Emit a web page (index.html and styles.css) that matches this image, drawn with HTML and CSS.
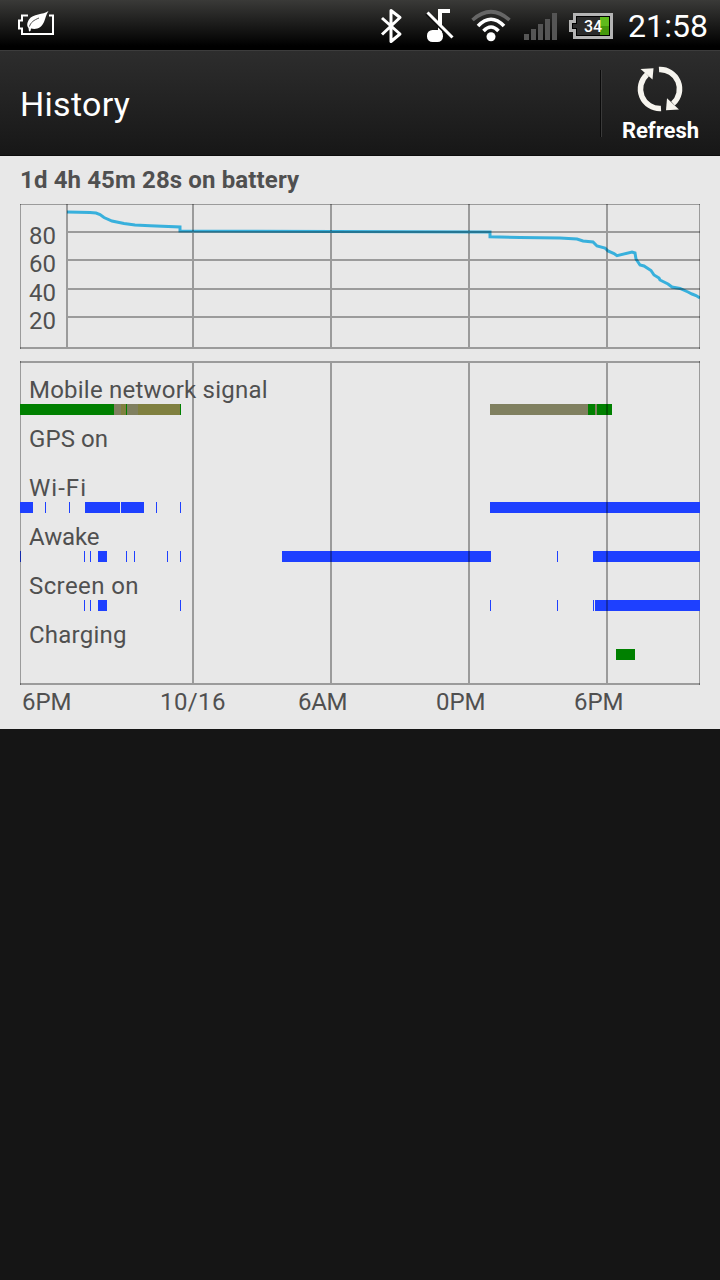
FILE: index.html
```
<!DOCTYPE html>
<html lang="en">
<head>
    <meta charset="UTF-8">
    <meta name="viewport" content="width=device-width, initial-scale=1.0">
    <title>History</title>
    <link rel="stylesheet" href="styles.css">
</head>
<body>
    <div class="status-bar">
        <!-- Power saver -->
        <svg class="saver-icon" width="40" height="30" viewBox="16 8 40 30">
            <path d="M28 15.500H22V20.500H19V28.500H22V34H53V15.500H49" fill="none" stroke="#fff" stroke-width="2"/>
            <path d="M48.500 11C43 15 33 13.500 29 19.500C26.500 23.500 27 26 28.500 28L29 31.500L30.500 31L31 28.500C37 30 41.500 27.500 44 22C45.500 18 46 15 48.500 11Z" fill="#fff"/>
            <path d="M29.500 26.500C30.500 22.500 34 20 39 18" fill="none" stroke="#222" stroke-width="0.800"/>
        </svg>

        <div class="status-right">
            <!-- Bluetooth, silent, wifi, signal, battery -->
            <svg width="240" height="40" viewBox="376 5 240 40">
                <path d="M382 18L400 34L391 41.500V10.500L400 17.500L382 34.500" fill="none" stroke="#fff" stroke-width="3" stroke-linejoin="round"/>

                <path d="M438 9H450V13H442V36H438Z" fill="#fff"/>
                <rect x="427" y="30" width="16" height="12" rx="5.500" fill="#fff"/>
                <path d="M426 14L451 39" stroke="#111" stroke-width="2"/>
                <path d="M427.500 12.500L452.500 37.500" stroke="#fff" stroke-width="3"/>

                <circle cx="491" cy="36.800" r="4.500" fill="#fff"/>
                <g fill="none" stroke-width="3.600">
                    <path d="M483.500 31Q491 23 498.500 31" stroke="#fff"/>
                    <path d="M478 26Q491 12.500 504 26" stroke="#fff"/>
                    <path d="M472.500 20Q491 3.500 509.500 20" stroke="#666"/>
                </g>

                <g fill="#555">
                    <rect x="524" y="34" width="5" height="6"/>
                    <rect x="531" y="29" width="5" height="11"/>
                    <rect x="538" y="24" width="5" height="16"/>
                    <rect x="545" y="19" width="5" height="21"/>
                    <rect x="552" y="13" width="5" height="27"/>
                </g>

                <path d="M573 13H613V39H573V32H569V20H573Z" fill="#b4b4b4"/>
                <path d="M576 16H610V36H576V29H572V23H576Z" fill="#000"/>
                <path d="M577 17H600V35H577V28H573V24H577Z" fill="#2b2b2b"/>
                <rect x="600" y="17" width="9" height="9" fill="#5fbb1c"/>
                <rect x="600" y="26" width="9" height="9" fill="#45990c"/>
                <text class="battery-text" x="593" y="32" text-anchor="middle">34</text>
            </svg>
            <span class="clock">21:58</span>
        </div>
    </div>

    <div class="header">
        <h1>History</h1>
        <div class="refresh">
            <svg width="48" height="48" viewBox="636 65 48 48">
                <g fill="none" stroke="#f6f4ee" stroke-width="5.500">
                    <path d="M661 108.400A19.400 19.400 0 0 1 647 74.500"/>
                    <path d="M659 69.600A19.400 19.400 0 0 1 673 103.500"/>
                </g>
                <path d="M640.500 69L653.500 68.200L652.500 79.500Z" fill="#f6f4ee"/>
                <path d="M679 109.500L666 110.200L667 98.300Z" fill="#f6f4ee"/>
            </svg>
            <span>Refresh</span>
        </div>
    </div>

    <div class="panel">
        <h2>1d 4h 45m 28s on battery</h2>

        <!-- Battery level -->
        <svg class="chart" width="680" height="145" viewBox="20 204 680 145">
            <polyline class="level" points="67,212 90,212.500 96,213 100,214.500 104,217.500 112,221 124,223.500 135,225 150,225.700 180,227 180,231 490,232 490,236.700 520,237.500 560,238 577,239 583,241 593,242 597,246 605,248 608,251 614,253.500 617,255.700 632,252 635,253 636,259 640,265 644,266 651,270.500 654,275 659,278 660,280 668,284 672,287 680,288.500 688,292 692,294 696,295.500 700,298"/>
            <path class="grid" d="M67 232H700M67 260H700M67 289H700M67 317H700M20 348H700M67 204V349M193 204V349M331 204V349M469 204V349M607 204V349"/>
            <path class="edge" d="M20 204.500H700M20.500 204V349M699.500 204V349"/>
            <g class="label">
                <text x="29" y="244" textLength="27">80</text>
                <text x="29" y="272" textLength="27">60</text>
                <text x="29" y="301" textLength="27">40</text>
                <text x="29" y="329" textLength="27">20</text>
            </g>
        </svg>

        <!-- Timeline -->
        <svg class="chart timeline" width="680" height="360" viewBox="20 361 680 360">
            <path class="green" d="M20 404h94v11h-94zM126 404h1v11h-1zM180 404h1v11h-1zM588 404h24v11h-24z"/>
            <path class="weak" d="M114 404h7v11h-7zM127 404h11v11h-11zM490 404h98v11h-98zM595 404h2v11h-2z"/>
            <path class="poor" d="M121 404h5v11h-5zM138 404h42v11h-42z"/>

            <path class="blue" d="M20 502h13v11h-13zM45 502h1v11h-1zM69 502h1v11h-1zM85 502h35v11h-35zM121 502h23v11h-23zM156 502h1v11h-1zM180 502h1v11h-1zM490 502h210v11h-210z"/>
            <path class="blue" d="M20 551h1v11h-1zM84 551h1v11h-1zM90 551h1v11h-1zM98 551h9v11h-9zM126 551h1v11h-1zM134 551h1v11h-1zM167 551h1v11h-1zM180 551h1v11h-1zM282 551h209v11h-209zM557 551h1v11h-1zM593 551h107v11h-107z"/>
            <path class="blue" d="M84 600h1v11h-1zM90 600h1v11h-1zM98 600h9v11h-9zM180 600h1v11h-1zM490 600h1v11h-1zM557 600h1v11h-1zM593 600h1v11h-1zM595 600h105v11h-105z"/>
            <path class="green" d="M616 649h19v11h-19z"/>

            <path class="grid" d="M20 362H700M20 684H700M193 361V685M331 361V685M469 361V685M607 361V685"/>
            <path class="edge" d="M20.500 361V404M20.500 415V502M20.500 513V685M699.500 361V502M699.500 513V551M699.500 562V600M699.500 611V685"/>

            <g class="label">
                <text x="29" y="398" textLength="238.500">Mobile network signal</text>
                <text x="29" y="447" textLength="79">GPS on</text>
                <text x="29" y="496" textLength="57">Wi-Fi</text>
                <text x="29" y="545" textLength="70.500">Awake</text>
                <text x="29" y="594" textLength="109.500">Screen on</text>
                <text x="29" y="643" textLength="97.500">Charging</text>
                <text x="22" y="710" textLength="49.500">6PM</text>
                <text x="160" y="710" textLength="65.500">10/16</text>
                <text x="298" y="710" textLength="49.500">6AM</text>
                <text x="436" y="710" textLength="49.500">0PM</text>
                <text x="574" y="710" textLength="49.500">6PM</text>
            </g>
        </svg>
    </div>
</body>
</html>
```
FILE: styles.css
```
body {
    font-family: Roboto, "Noto Sans", sans-serif;
    margin: 0;
    background-color: #151515;
}

svg {
    display: block;
    flex: none;
}

.status-bar {
    display: flex;
    justify-content: space-between;
    box-sizing: border-box;
    height: 50px;
    padding: 5px 12px 0 16px;
    background: linear-gradient(#3a3a38, #000 92%);
}

.saver-icon {
    margin-top: 3px;
}

.status-right {
    display: flex;
    gap: 12px;
}

.battery-text {
    font-size: 16px;
    font-weight: 500;
    fill: #fff;
}

.clock {
    width: 80px;
    font-size: 32px;
    line-height: 43px;
    letter-spacing: 0.1px;
    color: #fff;
    white-space: nowrap;
}

/* Title bar */
.header {
    display: flex;
    justify-content: space-between;
    align-items: center;
    box-sizing: border-box;
    height: 106px;
    padding-left: 20px;
    border-top: 1px solid #3c3c3c;
    border-bottom: 1px solid #0c0c0c;
    background: linear-gradient(#2d2d2d, #171717);
}

h1 {
    margin: 1px 0 0;
    font-size: 34px;
    font-weight: normal;
    line-height: 40px;
    letter-spacing: 0.3px;
    color: #fff;
}

.refresh {
    display: flex;
    flex-direction: column;
    align-items: center;
    box-sizing: border-box;
    width: 120px;
    height: 67px;
    border-left: 1px solid #0a0a0a;
    box-shadow: inset 1px 0 #3a3a3a;
}

.refresh svg {
    margin: -5px 2px 0 0;
}

.refresh span {
    font-size: 22px;
    font-weight: bold;
    line-height: 26px;
    margin-top: 5px;
    color: #fff;
}

/* Battery history */
.panel {
    box-sizing: border-box;
    height: 573px;
    padding: 10px 20px 0;
    background-color: #e8e8e8;
}

h2 {
    margin: 0 0 10px;
    font-size: 24px;
    font-weight: bold;
    line-height: 28px;
    letter-spacing: 0.13px;
    color: #505050;
}

.timeline {
    margin-top: 12px;
}

.level {
    fill: none;
    stroke: #38b0dc;
    stroke-width: 3;
}

.grid,
.edge {
    fill: none;
    stroke: rgba(0, 0, 0, 0.33);
    stroke-width: 2;
}

.edge {
    stroke-width: 1;
}

.label {
    font-size: 24px;
    fill: #505050;
}

.green {
    fill: #008000;
}

.weak {
    fill: #808060;
}

.poor {
    fill: #808040;
}

.blue {
    fill: #1e40ff;
}
```
